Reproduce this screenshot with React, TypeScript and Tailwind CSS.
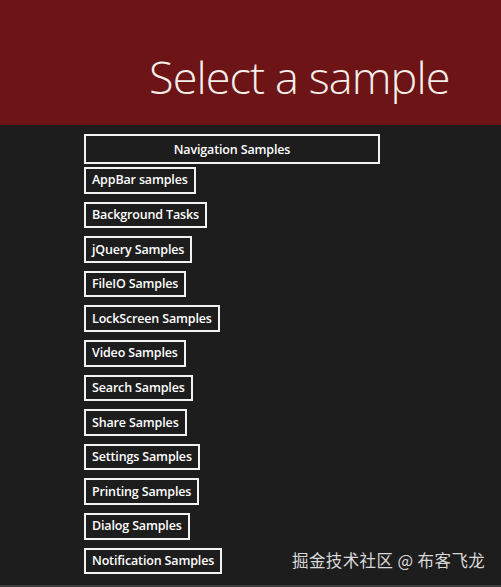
import React from "react";

const items = [
  "AppBar samples",
  "Background Tasks",
  "jQuery Samples",
  "FileIO Samples",
  "LockScreen Samples",
  "Video Samples",
  "Search Samples",
  "Share Samples",
  "Settings Samples",
  "Printing Samples",
  "Dialog Samples",
  "Notification Samples",
];

export default function App() {
  return (
    <div className="relative w-[501px] h-[587px] overflow-hidden bg-[#1d1d1d] font-['Open_Sans','Noto_Sans',sans-serif]">
      <div className="h-[125px] bg-[#6d1416] flex items-start">
        <h1 className="ml-[149px] mt-[47px] text-[45px] leading-[60px] font-light text-[#f4efe9] tracking-[-0.9px]">
          Select a sample
        </h1>
      </div>
      <div className="pl-[84px] pt-[9px] flex flex-col items-start">
        <button className="w-[296px] h-[30px] border-2 border-[#f2f2f2] pt-[3px] text-white text-[12.5px] font-semibold tracking-[-0.15px] flex items-center justify-center">
          Navigation Samples
        </button>
        <div className="mt-[3px] flex flex-col items-start gap-[8px]">
          {items.map((t) => (
            <button
              key={t}
              className="h-[26.6px] border-2 border-[#f2f2f2] px-[6px] pt-[1px] text-white text-[12.5px] font-semibold tracking-[-0.15px] flex items-center"
            >
              {t}
            </button>
          ))}
        </div>
      </div>
      <div className="absolute left-[292px] top-[548px] text-[16.5px] tracking-[0.4px] text-[#d8d8d8] font-['Noto_Sans_CJK_SC',sans-serif]">
        掘金技术社区 @ 布客飞龙
      </div>
      <div className="absolute left-0 right-0 bottom-0 h-[2px] bg-[#3a3a3a]" />
    </div>
  );
}
